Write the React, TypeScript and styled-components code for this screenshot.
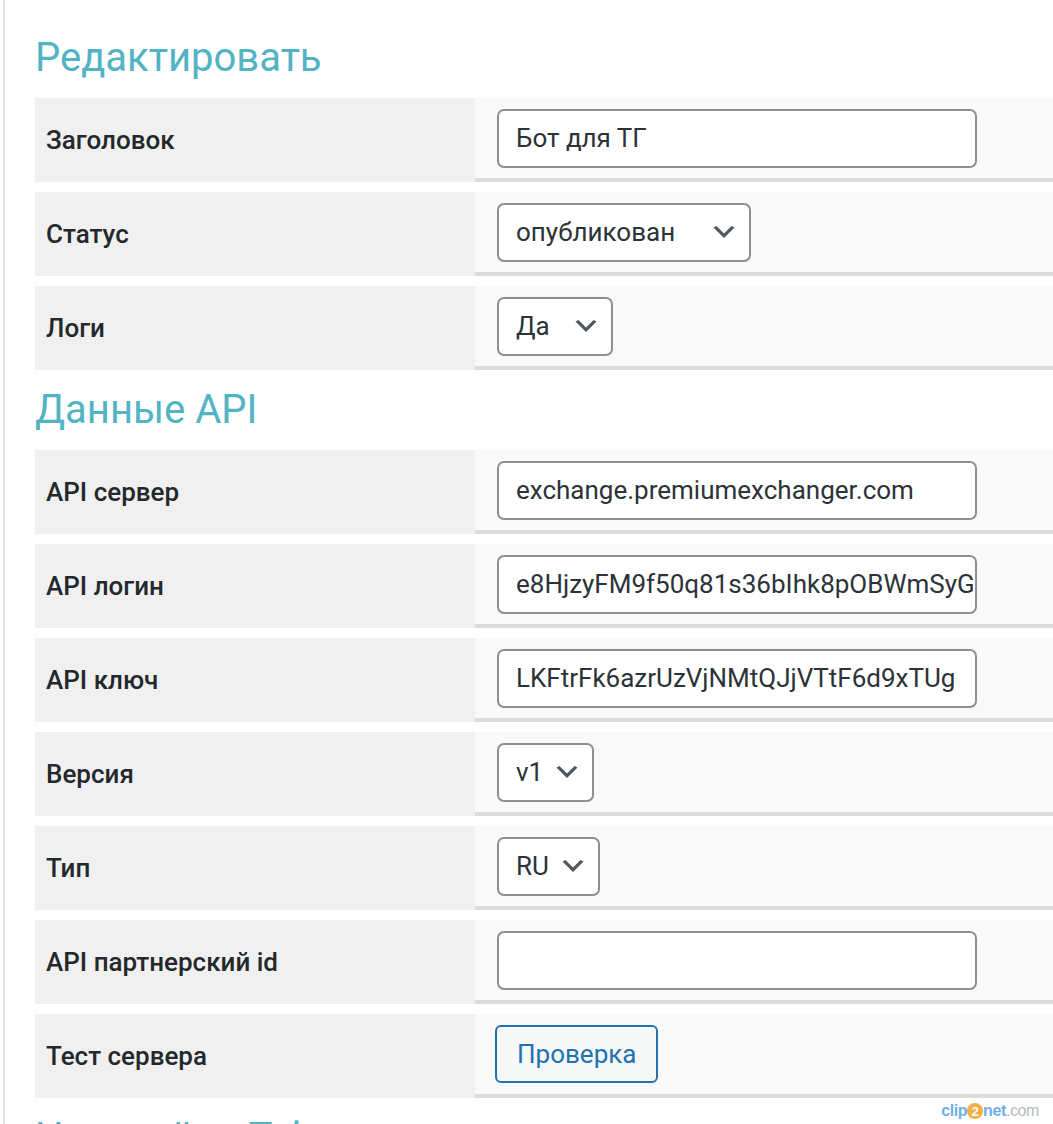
import React from "react";
import styled, { createGlobalStyle } from "styled-components";

const GlobalStyle = createGlobalStyle`
  html, body {
    margin: 0;
    padding: 0;
    background: #ffffff;
    overflow: hidden;
  }
  body {
    font-family: Roboto, "Noto Sans", "Liberation Sans", sans-serif;
    color: #1d2327;
  }
  * { box-sizing: border-box; }
`;

const Page = styled.div`
  position: relative;
  height: 1124px;
  overflow: hidden;
  padding-left: 3px;
`;

const Content = styled.div`
  height: 100%;
  border-left: 2px solid #e3e3e3;
  padding: 18px 0 0 30px;
`;

const SectionTitle = styled.h2`
  margin: 15px 0;
  font-family: Roboto, "Noto Sans", sans-serif;
  font-size: 40px;
  font-weight: 400;
  line-height: 50px;
  color: #52b3c4;
  white-space: nowrap;
`;

const Table = styled.div`
  display: flex;
  flex-direction: column;
  gap: 10px;
  width: 1100px;
`;

const Row = styled.div`
  display: grid;
  grid-template-columns: 440px 1fr;
  height: 84px;
`;

const Label = styled.div`
  display: flex;
  align-items: center;
  padding-left: 11px;
  background: #f0f0f0;
  font-size: 26px;
  font-weight: 500;
  color: #23282d;
`;

const Value = styled.div`
  display: flex;
  align-items: center;
  padding: 0 20px;
  background: #f9f9f9;
  border-bottom: 4px solid #dcdcdc;
`;

const TextInput = styled.input`
  margin-left: 2px;
  width: 480px;
  height: 59px;
  padding: 0 2px 0 17px;
  border: 2px solid #8c8f94;
  border-radius: 7px;
  background: #ffffff;
  font-family: Roboto, "Noto Sans", sans-serif;
  font-size: 26px;
  color: #2c3338;
  outline: none;
`;

const SelectWrap = styled.div<{ $w: number }>`
  position: relative;
  margin-left: 2px;
  width: ${(p) => p.$w}px;
  height: 59px;
`;

const Select = styled.select`
  appearance: none;
  -webkit-appearance: none;
  width: 100%;
  height: 100%;
  padding: 0 40px 0 17px;
  border: 2px solid #8c8f94;
  border-radius: 7px;
  background: #ffffff;
  font-family: Roboto, "Noto Sans", sans-serif;
  font-size: 26px;
  color: #2c3338;
  outline: none;
`;

const Chevron = styled.svg`
  position: absolute;
  right: 12px;
  top: 50%;
  width: 30px;
  height: 30px;
  transform: translateY(-50%);
  pointer-events: none;
`;

const Button = styled.button`
  height: 58px;
  padding: 0 20px;
  border: 2px solid #2271b1;
  border-radius: 6px;
  background: #f6f7f7;
  font-family: Roboto, "Noto Sans", sans-serif;
  font-size: 26px;
  color: #2271b1;
  cursor: pointer;
`;

const Watermark = styled.div`
  position: absolute;
  right: 14px;
  bottom: 4px;
  display: flex;
  align-items: center;
  font-family: "Liberation Sans", Arial, sans-serif;
  font-size: 16px;
  letter-spacing: -0.4px;
  opacity: 0.8;
`;

const WmBlue = styled.span`
  color: #4a9be0;
  font-weight: 700;
`;

const WmGray = styled.span`
  color: #a3a9ad;
`;

const WmTwo = styled.span`
  display: inline-flex;
  align-items: center;
  justify-content: center;
  width: 16px;
  height: 16px;
  border-radius: 50%;
  background: #f39a1e;
  color: #ffffff;
  font-weight: 700;
  font-size: 13px;
`;

const Arrow = () => (
  <Chevron viewBox="0 0 20 20">
    <path d="M5 6l5 5 5-5 2 1-7 7-7-7 2-1z" fill="#50575e" />
  </Chevron>
);

type Field =
  | { label: string; kind: "text"; value: string }
  | { label: string; kind: "select"; value: string; width: number; options: string[] }
  | { label: string; kind: "button"; value: string };

const general: Field[] = [
  { label: "Заголовок", kind: "text", value: "Бот для ТГ" },
  { label: "Статус", kind: "select", value: "опубликован", width: 254, options: ["опубликован", "черновик"] },
  { label: "Логи", kind: "select", value: "Да", width: 116, options: ["Да", "Нет"] },
];

const api: Field[] = [
  { label: "API сервер", kind: "text", value: "exchange.premiumexchanger.com" },
  { label: "API логин", kind: "text", value: "e8HjzyFM9f50q81s36bIhk8pOBWmSyGd2kQ" },
  { label: "API ключ", kind: "text", value: "LKFtrFk6azrUzVjNMtQJjVTtF6d9xTUg" },
  { label: "Версия", kind: "select", value: "v1", width: 97, options: ["v1"] },
  { label: "Тип", kind: "select", value: "RU", width: 103, options: ["RU", "EN"] },
  { label: "API партнерский id", kind: "text", value: "" },
  { label: "Тест сервера", kind: "button", value: "Проверка" },
];

const FieldRow = ({ f }: { f: Field }) => (
  <Row>
    <Label>{f.label}</Label>
    <Value>
      {f.kind === "text" && <TextInput type="text" defaultValue={f.value} />}
      {f.kind === "select" && (
        <SelectWrap $w={f.width}>
          <Select defaultValue={f.value}>
            {f.options.map((o) => (
              <option key={o} value={o}>
                {o}
              </option>
            ))}
          </Select>
          <Arrow />
        </SelectWrap>
      )}
      {f.kind === "button" && <Button type="button">{f.value}</Button>}
    </Value>
  </Row>
);

export default function App() {
  return (
    <>
      <GlobalStyle />
      <Page>
        <Content>
          <SectionTitle>Редактировать</SectionTitle>
          <Table>
            {general.map((f) => (
              <FieldRow key={f.label} f={f} />
            ))}
          </Table>
          <SectionTitle>Данные API</SectionTitle>
          <Table>
            {api.map((f) => (
              <FieldRow key={f.label} f={f} />
            ))}
          </Table>
          <SectionTitle>Настройки Telegram</SectionTitle>
        </Content>
        <Watermark>
          <WmBlue>clip</WmBlue>
          <WmTwo>2</WmTwo>
          <WmBlue>net</WmBlue>
          <WmGray>.com</WmGray>
        </Watermark>
      </Page>
    </>
  );
}
